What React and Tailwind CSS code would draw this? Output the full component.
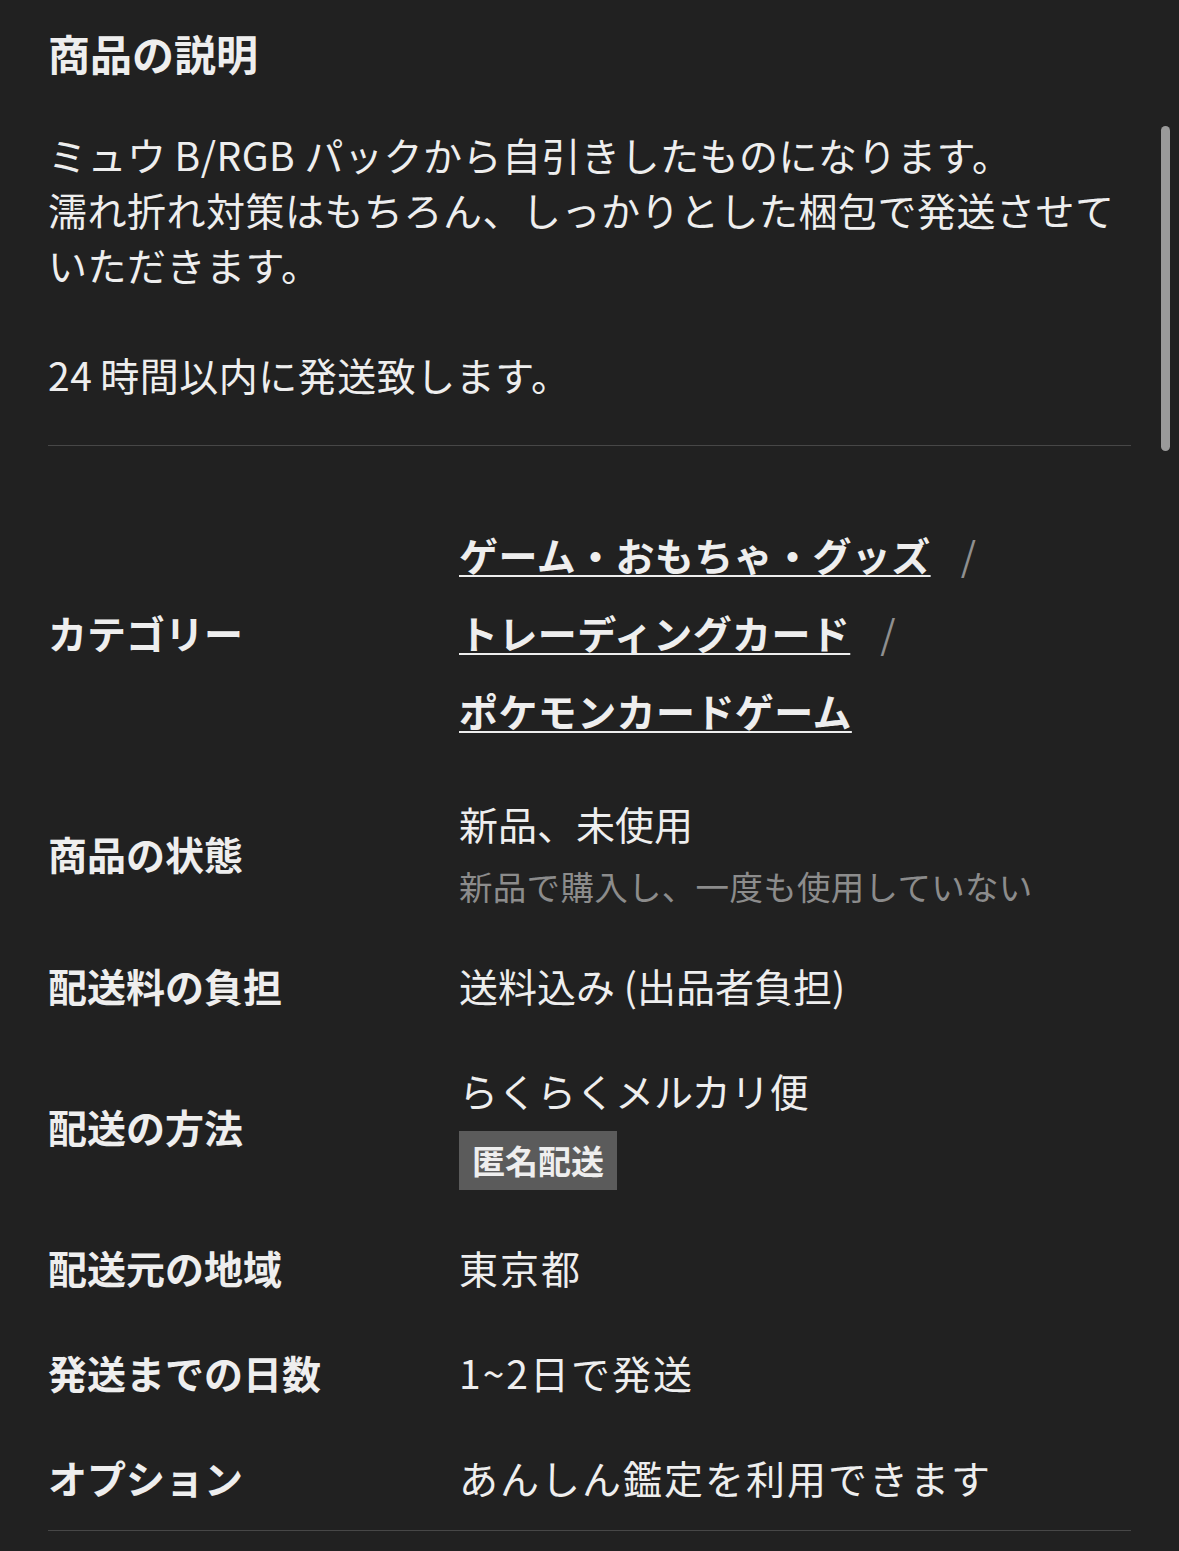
import React from 'react';

const font = { fontFamily: '"Noto Sans CJK JP", "Noto Sans", sans-serif' };

const Row = ({ label, children }) => (
  <div className="flex items-center py-[25px]">
    <div className="w-[411px] shrink-0 font-bold text-[39px] leading-[55px] text-[#eeeeee]">{label}</div>
    <div className="flex-1 min-w-0 text-[39px] leading-[55px] text-[#eeeeee]">{children}</div>
  </div>
);

const categories = ['ゲーム・おもちゃ・グッズ', 'トレーディングカード', 'ポケモンカードゲーム'];

export default function App() {
  return (
    <div className="relative w-[1179px] h-[1551px] overflow-hidden bg-[#212121]" style={font}>
      <div className="px-[48px] pt-[23px]">
        <h2 className="text-[42px] leading-[60px] font-bold text-[#eeeeee]">商品の説明</h2>

        <div className="mt-[44px] mb-[43px] text-[39px] leading-[55px] tracking-[0.5px] text-[#eeeeee]">
          <p>ミュウ<span className="ml-[8px]">B/RGB</span> パックから自引きしたものになります。</p>
          <p>濡れ折れ対策はもちろん、しっかりとした梱包で発送させていただきます。</p>
          <p>&nbsp;</p>
          <p>24<span className="ml-[8px]">時間以内に発送致します。</span></p>
        </div>

        <div className="border-t border-[#474747]" />

        <div className="mt-[44px] border-b border-[#474747]">
          <Row label="カテゴリー">
            <div className="flex flex-wrap leading-[78px]">
              {categories.map((c, i) => (
                <div key={c} className="flex whitespace-nowrap">
                  <a className="font-bold underline decoration-2 underline-offset-[4px] tracking-[0.4px] text-[#eeeeee]">{c}</a>
                  {i < categories.length - 1 && (
                    <span className="mx-[30px] text-[#8f8f8f]">/</span>
                  )}
                </div>
              ))}
            </div>
          </Row>

          <Row label="商品の状態">
            <p className="leading-[49px]">新品、未使用</p>
            <p className="mt-[15px] text-[33.5px] leading-[45px] tracking-[0.3px] text-[#8c8c8c]">新品で購入し、一度も使用していない</p>
          </Row>

          <Row label="配送料の負担">
            <p>送料込み (出品者負担)</p>
          </Row>

          <Row label="配送の方法">
            <p>らくらくメルカリ便</p>
            <div className="mt-[13px] inline-flex h-[59px] items-center px-[13px] bg-[#5b5b5b] text-[33px] font-bold text-[#eeeeee]">
              匿名配送
            </div>
          </Row>

          <Row label="配送元の地域">
            <p className="tracking-[2px]">東京都</p>
          </Row>

          <Row label="発送までの日数">
            <p className="tracking-[2px]">1~2日で発送</p>
          </Row>

          <Row label="オプション">
            <p className="tracking-[2px]">あんしん鑑定を利用できます</p>
          </Row>
        </div>
      </div>

      {/* overlay scrollbar */}
      <div className="absolute left-[1161px] top-[126px] w-[9px] h-[325px] rounded-full bg-[#9a9a9a]" />
    </div>
  );
}
